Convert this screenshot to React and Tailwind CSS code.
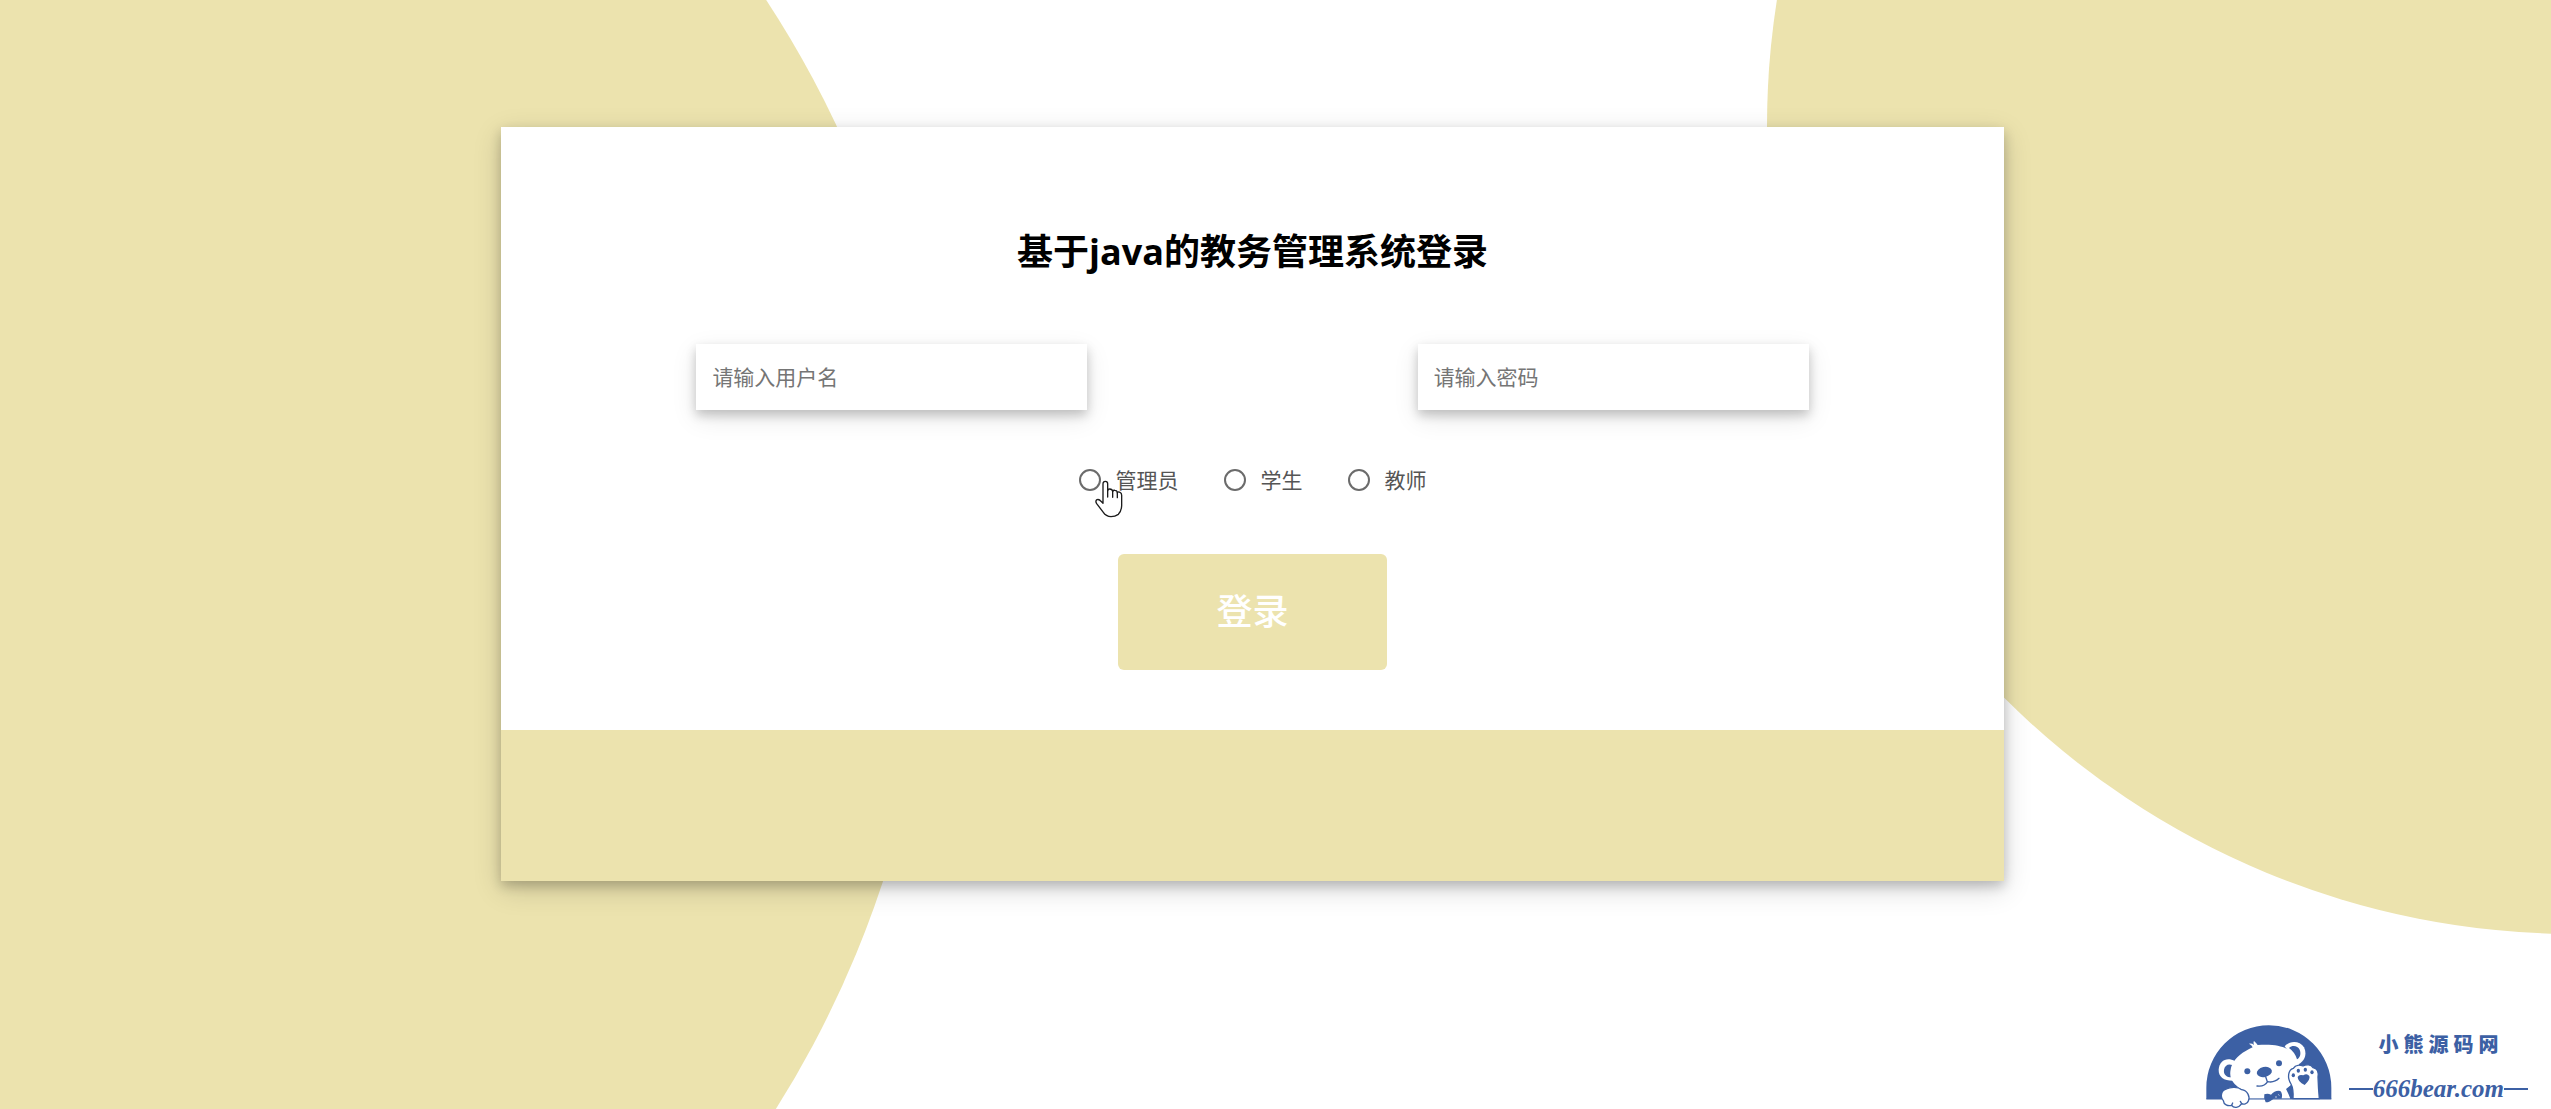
const ROLES = [
  { id: "admin", label: "管理员" },
  { id: "student", label: "学生" },
  { id: "teacher", label: "教师" },
];

const INPUT_CLASS =
  "h-[66px] w-[391px] bg-white px-4 text-[21px] text-[#444444] shadow-[0_5px_10px_rgba(0,0,0,0.2),0_8px_26px_rgba(0,0,0,0.1)] outline-none placeholder:text-[#757575]";

function HandPointer() {
  return (
    <svg
      className="pointer-events-none absolute top-4 left-4"
      width="28"
      height="38"
      viewBox="132 123 84 114"
      fill="#ffffff"
      stroke="#1c1c1c"
      strokeWidth="4"
      strokeLinejoin="round"
      strokeLinecap="round"
      aria-hidden="true"
    >
      <path d="M156 190 V134 Q156 127 163 127 Q170 127 170 134 V155 Q171 150 176 150 Q184 150 185 157 Q187 153 192 154 Q199 155 199 161 Q202 157 207 160 Q212 162 212 169 V200 Q211 217 202 226 Q192 233 180 233 Q165 232 157 220 L137 194 Q132 186 138 182 Q145 180 150 187 L156 193 Z" />
      <path d="M170 153 V174 M185 157 V175 M199 161 V176" fill="none" />
    </svg>
  );
}

function BearLogo() {
  return (
    <svg width="128" height="86" viewBox="48 40 384 258" aria-hidden="true">
      <path d="M52 268 V234 A187 187 0 0 1 427 234 V268 Z" fill="#3c60a4" />
      {/* ears */}
      <path d="M134 213 C106 214 88 202 89 180 C91 153 114 141 138 155 Z" fill="#ffffff" />
      <path d="M128 203 C112 203 103 194 105 180 C107 167 118 161 130 166 Q122 184 128 203 Z" fill="#3c60a4" />
      <path d="M287 110 C301 93 332 92 345 113 C355 133 347 155 328 164 Z" fill="#ffffff" />
      {/* head and body */}
      <path d="M180 102 Q190 101 195 106 Q192 98 195 94 Q202 100 206 106 C248 103 275 108 293 117 C318 130 330 147 330 172 C322 210 310 225 291 238 Q300 255 304 267 H176 Q178 250 158 239 C133 225 122 207 124 188 C126 159 145 138 170 124 Q180 118 191 113 Q188 106 180 102 Z" fill="#ffffff" />
      <path d="M300 115 C310 105 326 108 332 120 C337 132 333 144 324 149 Q318 128 300 115 Z" fill="#3c60a4" />
      <circle cx="175" cy="185" r="9" fill="#3c60a4" />
      <circle cx="270" cy="161" r="9" fill="#3c60a4" />
      <ellipse cx="226" cy="187" rx="23" ry="15" transform="rotate(-12 226 187)" fill="#3c60a4" />
      <path d="M230 201 L235 216 M204 229 Q226 232 236 216 Q256 220 270 206" fill="none" stroke="#3c60a4" strokeWidth="4" strokeLinecap="round" />
      {/* bow tie */}
      <path d="M226 254 Q236 250 246 255 Q258 241 274 244 Q282 253 278 267 H254 Q240 279 230 278 Q223 267 226 254 Z" fill="#3c60a4" />
      <path d="M258 262 L264 262 M268 254 L271 258" stroke="#ffffff" strokeWidth="2" />
      {/* raised paw */}
      <path d="M312 267 Q314 238 306 223 C294 205 297 180 313 176 C320 165 334 166 342 169 C353 163 366 165 372 174 C386 176 389 188 387 202 Q388 235 391 267 Z" fill="#ffffff" stroke="#3c60a4" strokeWidth="4" />
      <path d="M326 202 Q330 193 343 197 Q354 190 361 199 Q365 209 347 226 Q326 216 326 202 Z" fill="#3c60a4" />
      <ellipse cx="313" cy="197" rx="5" ry="6" fill="#3c60a4" />
      <ellipse cx="328" cy="183" rx="5" ry="6" fill="#3c60a4" />
      <ellipse cx="349" cy="180" rx="5" ry="6" fill="#3c60a4" />
      <ellipse cx="369" cy="188" rx="5" ry="6" fill="#3c60a4" />
      <path d="M52 268 H427" stroke="#3c60a4" strokeWidth="3" />
      {/* resting paw */}
      <path d="M103 273 C91 258 99 240 112 238 C125 231 147 231 158 240 C176 243 184 261 178 274 C175 284 163 285 158 282 C149 296 134 296 128 287 C116 290 104 285 103 273 Z" fill="#ffffff" stroke="#3c60a4" strokeWidth="4" />
      <path d="M128 287 L131 280 M158 282 L154 275" stroke="#3c60a4" strokeWidth="4" strokeLinecap="round" />
    </svg>
  );
}

function SiteMark() {
  return (
    <aside className="absolute right-[23px] bottom-0 flex items-end gap-4 text-[#3c60a4]">
      <BearLogo />
      <div className="flex flex-col items-center gap-[18px] pb-[6px]">
        <p className="flex gap-[5px] text-[20px] leading-6 font-black">
          {[..."小熊源码网"].map((char) => (
            <span key={char}>{char}</span>
          ))}
        </p>
        <p className="flex items-center font-['Liberation_Serif',serif] text-[25px] leading-7 font-bold italic">
          <span className="h-0.5 w-6 bg-[#3c60a4]" />
          666bear.com
          <span className="h-0.5 w-6 bg-[#3c60a4]" />
        </p>
      </div>
    </aside>
  );
}

export default function App() {
  return (
    <div className="relative min-h-screen overflow-hidden bg-white font-['Open_Sans','Noto_Sans_CJK_SC',sans-serif]">
      <div className="absolute -top-[463px] -left-[1116px] size-[2050px] rounded-full bg-[#ece3ae]" />
      <div className="absolute -top-[682px] -right-[832px] size-[1616px] rounded-full bg-[#ece3ae]" />

      <main className="relative flex justify-center pt-[127px] pr-[46px]">
        <section className="w-[60%] bg-white shadow-[0_5px_11px_rgba(0,0,0,0.2),0_8px_27px_rgba(0,0,0,0.16)]">
          <form
            className="flex flex-col items-center pt-[101px] pb-[60px]"
            onSubmit={(event) => event.preventDefault()}
          >
            <h1 className="text-4xl leading-[48px] font-bold text-black">基于java的教务管理系统登录</h1>

            <div className="mt-[68px] flex w-full justify-between px-[13%]">
              <input className={INPUT_CLASS} type="text" placeholder="请输入用户名" aria-label="用户名" />
              <input className={INPUT_CLASS} type="password" placeholder="请输入密码" aria-label="密码" />
            </div>

            <div className="mt-[54px] flex gap-[45px]">
              {ROLES.map((role, index) => (
                <label
                  key={role.id}
                  htmlFor={role.id}
                  className="relative flex items-center gap-[15px] text-[21px] leading-8 text-[#555555]"
                >
                  <input
                    id={role.id}
                    type="radio"
                    name="role"
                    className="size-[22px] appearance-none rounded-full border-2 border-[#6b6b6b] bg-white checked:border-[6px]"
                  />
                  {role.label}
                  {index === 0 && <HandPointer />}
                </label>
              ))}
            </div>

            <button
              type="submit"
              className="mt-[58px] h-[116px] w-[269px] rounded-md bg-[#ece3ae] text-4xl font-medium text-white"
            >
              登录
            </button>
          </form>
          <div className="h-[151px] bg-[#ece3ae]" />
        </section>
      </main>

      <SiteMark />
    </div>
  );
}
